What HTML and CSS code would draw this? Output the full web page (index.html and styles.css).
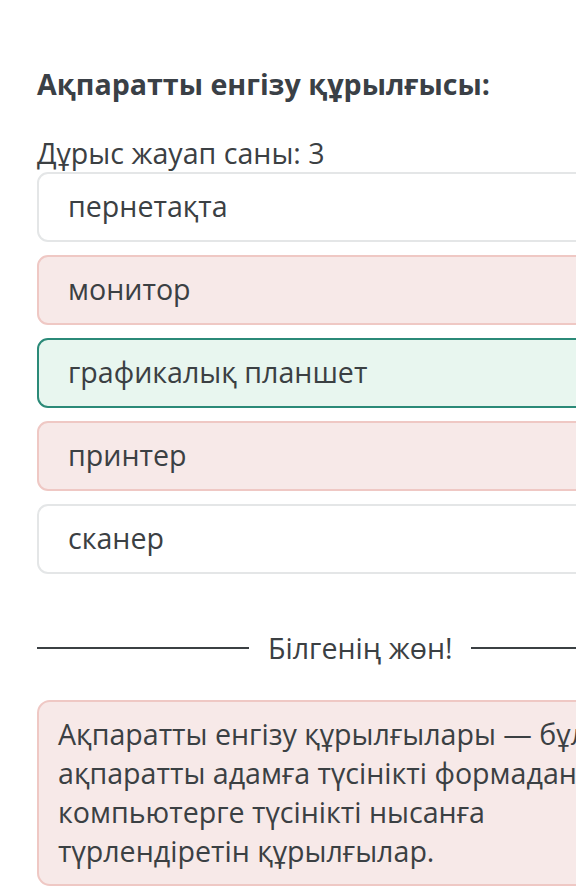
FILE: index.html
```html
<!DOCTYPE html>
<html lang="kk">
<head>
<meta charset="utf-8">
<link rel="stylesheet" href="styles.css">
</head>
<body>
<main class="page">
  <h1 class="title">Ақпаратты енгізу құрылғысы:</h1>
  <p class="count">Дұрыс жауап саны: 3</p>
  <ul class="options">
    <li class="option">пернетақта</li>
    <li class="option wrong">монитор</li>
    <li class="option right">графикалық планшет</li>
    <li class="option wrong">принтер</li>
    <li class="option">сканер</li>
  </ul>
  <div class="divider"><span class="line"></span><span class="label">Білгенің жөн!</span><span class="line"></span></div>
  <div class="fact">Ақпаратты енгізу құрылғылары — бұл ақпаратты адамға түсінікті формадан компьютерге түсінікті нысанға түрлендіретін құрылғылар.</div>
</main>
</body>
</html>
```
FILE: styles.css
```css
html, body {
  margin: 0;
  padding: 0;
  background: #fff;
  overflow: hidden;
}
body {
  font-family: "Open Sans", "Noto Sans", sans-serif;
  color: #3b4043;
  width: 576px;
  height: 896px;
}
.page {
  padding: 0 0 0 37px;
  width: 640px;
}
.title {
  margin: 0;
  padding-top: 64px;
  font-size: 28.6px;
  font-weight: 700;
  line-height: 40px;
  color: #3a4046;
}
.count {
  margin: 30px 0 0;
  font-size: 28.6px;
  line-height: 38px;
  font-weight: 400;
}
.options {
  list-style: none;
  margin: 0;
  padding: 0;
  display: flex;
  flex-direction: column;
  gap: 13px;
}
.option {
  box-sizing: border-box;
  height: 70px;
  border: 2px solid #e4e6e7;
  border-radius: 11px;
  background: #fff;
  padding: 0 0 2px 29px;
  display: flex;
  align-items: center;
  font-size: 28.6px;
  line-height: 38px;
}
.option.wrong {
  background: #f7e9e8;
  border-color: #efc8c4;
}
.option.right {
  background: #e8f6ef;
  border-color: #2b8a78;
}
.divider {
  margin-top: 54px;
  display: flex;
  align-items: center;
  width: 640px;
}
.divider .line {
  display: block;
  height: 2px;
  background: #3b4043;
  width: 212px;
}
.divider .line:last-child {
  width: 140px;
}
.divider .label {
  font-size: 28.6px;
  line-height: 40px;
  padding: 0 18px 0 19px;
  color: #3b4043;
}
.fact {
  margin-top: 32px;
  box-sizing: border-box;
  width: 640px;
  border: 2px solid #efc8c4;
  background: #f7e9e8;
  border-radius: 13px;
  padding: 12px 20px 14px 19px;
  font-size: 28.6px;
  line-height: 39px;
}
```
